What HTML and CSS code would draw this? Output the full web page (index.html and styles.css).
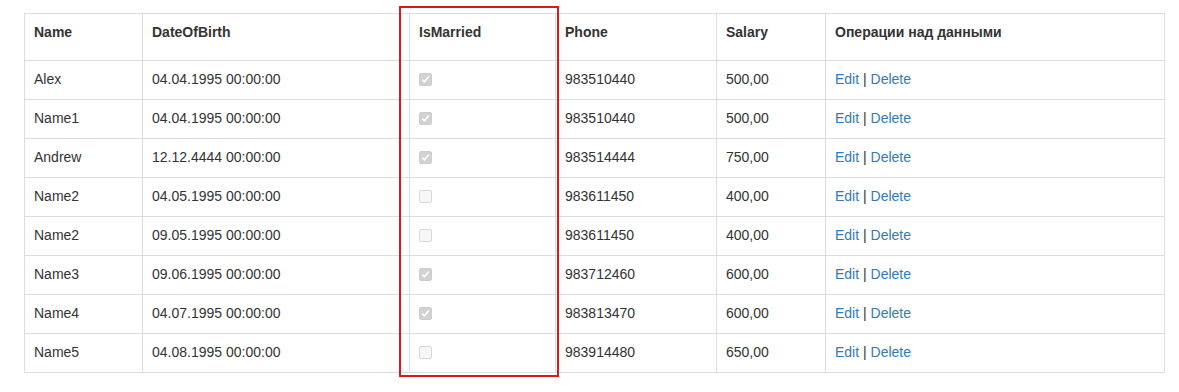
FILE: index.html
```html
<!DOCTYPE html>
<html lang="ru">
<head>
<meta charset="utf-8">
<title>Table</title>
<link rel="stylesheet" href="styles.css">
</head>
<body>
<div class="page">
  <table class="grid">
    <colgroup>
      <col class="c-name"><col class="c-dob"><col class="c-mar"><col class="c-phone"><col class="c-sal"><col class="c-ops">
    </colgroup>
    <thead>
      <tr><th>Name</th><th>DateOfBirth</th><th>IsMarried</th><th>Phone</th><th>Salary</th><th>Операции над данными</th></tr>
    </thead>
    <tbody>
      <tr><td>Alex</td><td>04.04.1995 00:00:00</td><td><span class="chk on"></span></td><td>983510440</td><td>500,00</td><td><a href="#">Edit</a> | <a href="#">Delete</a></td></tr>
      <tr><td>Name1</td><td>04.04.1995 00:00:00</td><td><span class="chk on"></span></td><td>983510440</td><td>500,00</td><td><a href="#">Edit</a> | <a href="#">Delete</a></td></tr>
      <tr><td>Andrew</td><td>12.12.4444 00:00:00</td><td><span class="chk on"></span></td><td>983514444</td><td>750,00</td><td><a href="#">Edit</a> | <a href="#">Delete</a></td></tr>
      <tr><td>Name2</td><td>04.05.1995 00:00:00</td><td><span class="chk"></span></td><td>983611450</td><td>400,00</td><td><a href="#">Edit</a> | <a href="#">Delete</a></td></tr>
      <tr><td>Name2</td><td>09.05.1995 00:00:00</td><td><span class="chk"></span></td><td>983611450</td><td>400,00</td><td><a href="#">Edit</a> | <a href="#">Delete</a></td></tr>
      <tr><td>Name3</td><td>09.06.1995 00:00:00</td><td><span class="chk on"></span></td><td>983712460</td><td>600,00</td><td><a href="#">Edit</a> | <a href="#">Delete</a></td></tr>
      <tr><td>Name4</td><td>04.07.1995 00:00:00</td><td><span class="chk on"></span></td><td>983813470</td><td>600,00</td><td><a href="#">Edit</a> | <a href="#">Delete</a></td></tr>
      <tr><td>Name5</td><td>04.08.1995 00:00:00</td><td><span class="chk"></span></td><td>983914480</td><td>650,00</td><td><a href="#">Edit</a> | <a href="#">Delete</a></td></tr>
    </tbody>
  </table>
  <div class="highlight"></div>
</div>
</body>
</html>
```

FILE: styles.css
```css
html, body {
  margin: 0;
  padding: 0;
  background: #fff;
}
body {
  font-family: "Liberation Sans", Arial, sans-serif;
  font-size: 14px;
  line-height: 20px;
  color: #333;
}
.page {
  position: relative;
  padding: 13px 0 20px 24px;
  min-height: 392px;
  box-sizing: border-box;
}
.grid {
  border-collapse: collapse;
  table-layout: fixed;
  width: 1140px;
}
.c-name { width: 118px; }
.c-dob { width: 267px; }
.c-mar { width: 146px; }
.c-phone { width: 161px; }
.c-sal { width: 109px; }
.c-ops { width: 339px; }
.grid th,
.grid td {
  border: 1px solid #ddd;
  padding: 0 8px 0 9px;
  text-align: left;
}
.grid th {
  height: 47px;
  box-sizing: border-box;
  padding-top: 8px;
  vertical-align: top;
  font-weight: bold;
}
.grid td {
  height: 39px;
  box-sizing: border-box;
  padding-bottom: 2px;
  vertical-align: middle;
}
.grid a {
  color: #337ab7;
  text-decoration: none;
}
.chk {
  display: block;
  width: 13px;
  height: 13px;
  box-sizing: border-box;
  border-radius: 2px;
  border: 1px solid #d8d8d8;
  background: #f7f7f7;
}
.chk.on {
  border-color: #cdcdcd;
  background: #d2d2d2 url("data:image/svg+xml,%3Csvg xmlns='http://www.w3.org/2000/svg' width='11' height='11' viewBox='0 0 11 11'%3E%3Cpath d='M2.2 5.6 L4.4 7.8 L8.8 2.6' fill='none' stroke='%23ffffff' stroke-width='1.6'/%3E%3C/svg%3E") center / 11px 11px no-repeat;
}
.highlight {
  position: absolute;
  left: 399px;
  top: 6px;
  width: 160px;
  height: 371px;
  box-sizing: border-box;
  border: 2px solid #d9191c;
  pointer-events: none;
}
```
